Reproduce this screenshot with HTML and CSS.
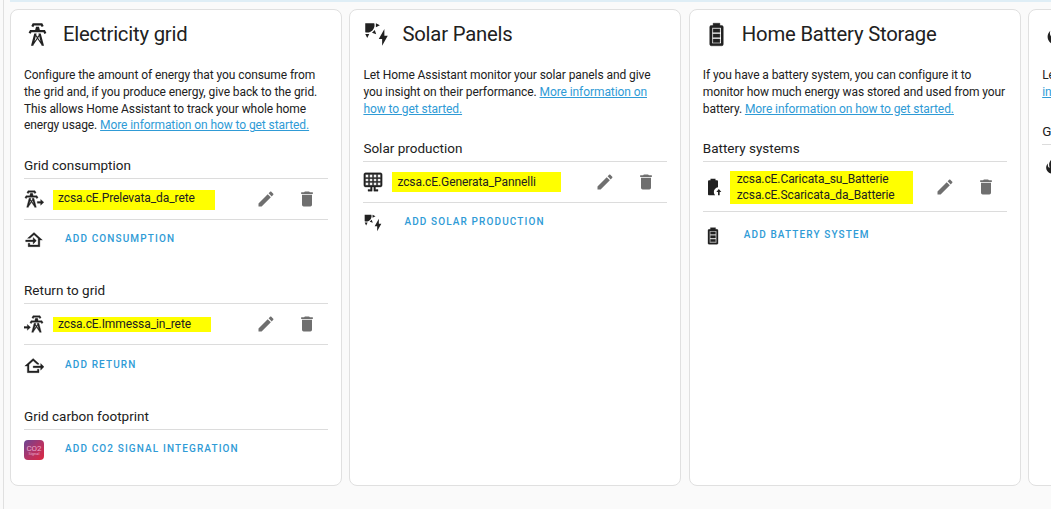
FILE: index.html
```html
<!DOCTYPE html>
<html lang="en">
<head>
<meta charset="utf-8">
<title>Energy configuration</title>
<link rel="stylesheet" href="styles.css">
</head>
<body>
<svg class="defs" aria-hidden="true">
  <symbol id="tower" viewBox="0 0 24 24"><path d="M8.28,5.45L6.5,4.55L7.76,2H16.23L17.5,4.55L15.72,5.44L15,4H9L8.28,5.45M18.62,8H14.09L13.3,5H10.7L9.91,8H5.38L4.1,10.55L5.89,11.44L6.62,10H17.38L18.1,11.45L19.89,10.56L18.62,8M17.77,22H15.7L15.46,21.1L12,15.9L8.53,21.1L8.3,22H6.23L9.12,11H11.19L10.83,12.35L12,14.1L13.16,12.35L12.81,11H14.88L17.77,22M11.4,15L10.5,13.65L9.32,18.13L11.4,15M14.68,18.12L13.5,13.64L12.6,15L14.68,18.12Z"/></symbol>
  <symbol id="solar" viewBox="0 0 24 24"><path d="M11.45,2V5.55L15,3.77L11.45,2M10.45,8L8,10.46L11.75,11.71L10.45,8M2,11.45L3.77,15L5.55,11.45H2M10,2H2V10C2.57,10.17 3.17,10.25 3.77,10.25C7.35,10.26 10.26,7.35 10.27,3.75C10.26,3.16 10.17,2.57 10,2M17,22V16H14L19,7V13H22L17,22Z"/></symbol>
  <symbol id="battery" viewBox="0 0 24 24"><path d="M16,20H8V6H16M16.67,4H15V2H9V4H7.33A1.33,1.33 0 0,0 6,5.33V20.67C6,21.4 6.6,22 7.33,22H16.67A1.33,1.33 0 0,0 18,20.67V5.33C18,4.6 17.4,4 16.67,4M15,16H9V19H15V16M15,7H9V10H15V7M15,11.5H9V14.5H15V11.5Z"/></symbol>
  <symbol id="pencil" viewBox="0 0 24 24"><path d="M20.71,7.04C21.1,6.65 21.1,6 20.71,5.63L18.37,3.29C18,2.9 17.35,2.9 16.96,3.29L15.12,5.12L18.87,8.87M3,17.25V21H6.75L17.81,9.93L14.06,6.18L3,17.25Z"/></symbol>
  <symbol id="delete" viewBox="0 0 24 24"><path d="M19,4H15.5L14.5,3H9.5L8.5,4H5V6H19M6,19A2,2 0 0,0 8,21H16A2,2 0 0,0 18,19V7H6V19Z"/></symbol>
  <symbol id="tower-export" viewBox="0 0 24 24"><use href="#tower" x="-3" y="0" width="24" height="24"/><path d="M20 12.5L23.8 16L20 19.5V17H16V15H20Z"/></symbol>
  <symbol id="tower-import" viewBox="0 0 24 24"><use href="#tower" x="3" y="0" width="24" height="24"/><path d="M4 12.5L7.8 16L4 19.5V17H0V15H4Z"/></symbol>
  <symbol id="home-in" viewBox="0 0 24 24"><path d="M15 13L11 9V12H2V14H11V17M5 20V16H7V18H17V10.19L12 5.69L7.21 10H4.22L12 3L22 12H19V20H5Z"/></symbol>
  <symbol id="home-out" viewBox="0 0 24 24"><path d="M24 13L20 17V14H11V12H20V9L24 13M4 20V12H1L11 3L18 9.3V10H15.79L11 5.69L6 10.19V18H16V16H18V20H4Z"/></symbol>
  <symbol id="panel" viewBox="0 0 24 24"><path fill-rule="evenodd" d="M3 1H21A2 2 0 0 1 23 3V16A2 2 0 0 1 21 18H15V21H18V23H13V18H11V23H6V21H9V18H3A2 2 0 0 1 1 16V3A2 2 0 0 1 3 1M3 3V6.5H6.5V3ZM8 3V6.5H11.3V3ZM12.8 3V6.5H16.1V3ZM17.6 3V6.5H21V3ZM3 8V11.2H6.5V8ZM8 8V11.2H11.3V8ZM12.8 8V11.2H16.1V8ZM17.6 8V11.2H21V8ZM3 12.7V16H6.5V12.7ZM8 12.7V16H11.3V12.7ZM12.8 12.7V16H16.1V12.7ZM17.6 12.7V16H21V12.7Z"/></symbol>
  <symbol id="battery-up" viewBox="0 0 24 24"><path d="M16.67 4H15V2H9V4H7.33A1.33 1.33 0 0 0 6 5.33V20.67C6 21.4 6.6 22 7.33 22H14.5C13.5 20.9 13 19.5 13 18C13 15.2 15.1 12.8 18 12.3V5.33C18 4.6 17.4 4 16.67 4M19 14.5L22 18H20V22H18V18H16Z"/></symbol>
  <symbol id="fire" viewBox="0 0 24 24"><path d="M17.66 11.2C17.43 10.9 17.15 10.64 16.89 10.38C16.22 9.78 15.46 9.35 14.82 8.72C13.33 7.26 13 4.85 13.95 3C13 3.23 12.17 3.75 11.46 4.32C8.87 6.4 7.85 10.07 9.07 13.22C9.11 13.32 9.15 13.42 9.15 13.55C9.15 13.77 9 13.97 8.8 14.05C8.57 14.15 8.33 14.09 8.14 13.93C6.87 12.33 6.69 10.28 7.45 8.64C5.78 10 4.87 12.3 5 14.47C5.12 16.94 6.63 19.18 8.9 20.3C11.5 21.5 15 21.3 17.2 19.3C19.6 17.1 20.1 13.8 17.66 11.2Z"/></symbol>
</svg>
<div class="app">
  <div class="banner"></div>
  <main class="cards">
    <section class="card">
      <h1 class="title"><svg class="title-icon"><use href="#tower"/></svg>Electricity grid</h1>
      <p class="intro">Configure the amount of energy that you consume from<br>the grid and, if you produce energy, give back to the grid.<br>This allows Home Assistant to track your whole home<br>energy usage. <a href="#">More information on how to get started.</a></p>
      <h2 class="heading">Grid consumption</h2>
      <div class="row"><svg class="icon bold"><use href="#tower-export"/></svg><span class="mark mark-grid">zcsa.cE.Prelevata_da_rete</span><span class="tools"><svg class="icon"><use href="#pencil"/></svg><svg class="icon"><use href="#delete"/></svg></span></div>
      <div class="action"><svg class="icon bold"><use href="#home-in"/></svg><a class="button" href="#">ADD CONSUMPTION</a></div>
      <h2 class="heading">Return to grid</h2>
      <div class="row"><svg class="icon bold"><use href="#tower-import"/></svg><span class="mark mark-return">zcsa.cE.Immessa_in_rete</span><span class="tools"><svg class="icon"><use href="#pencil"/></svg><svg class="icon"><use href="#delete"/></svg></span></div>
      <div class="action"><svg class="icon bold"><use href="#home-out"/></svg><a class="button" href="#">ADD RETURN</a></div>
      <h2 class="heading">Grid carbon footprint</h2>
      <div class="action"><span class="co2"><span class="co2-name">CO2</span><span class="co2-sub">Signal</span></span><a class="button" href="#">ADD CO2 SIGNAL INTEGRATION</a></div>
    </section>
    <section class="card">
      <h1 class="title"><svg class="title-icon"><use href="#solar"/></svg>Solar Panels</h1>
      <p class="intro">Let Home Assistant monitor your solar panels and give<br>you insight on their performance. <a href="#">More information on<br>how to get started.</a></p>
      <h2 class="heading">Solar production</h2>
      <div class="row"><svg class="icon bold"><use href="#panel"/></svg><span class="mark mark-solar">zcsa.cE.Generata_Pannelli</span><span class="tools"><svg class="icon"><use href="#pencil"/></svg><svg class="icon"><use href="#delete"/></svg></span></div>
      <div class="action"><svg class="icon"><use href="#solar"/></svg><a class="button" href="#">ADD SOLAR PRODUCTION</a></div>
    </section>
    <section class="card">
      <h1 class="title"><svg class="title-icon bold"><use href="#battery"/></svg>Home Battery Storage</h1>
      <p class="intro">If you have a battery system, you can configure it to<br>monitor how much energy was stored and used from your<br>battery. <a href="#">More information on how to get started.</a></p>
      <h2 class="heading">Battery systems</h2>
      <div class="row row-tall"><svg class="icon"><use href="#battery-up"/></svg><span class="mark mark-battery">zcsa.cE.Caricata_su_Batterie<br>zcsa.cE.Scaricata_da_Batterie</span><span class="tools"><svg class="icon"><use href="#pencil"/></svg><svg class="icon"><use href="#delete"/></svg></span></div>
      <div class="action action-battery"><svg class="icon bold"><use href="#battery"/></svg><a class="button" href="#">ADD BATTERY SYSTEM</a></div>
    </section>
    <section class="card">
      <h1 class="title"><svg class="title-icon"><use href="#fire"/></svg></h1>
      <p class="intro">Let Home Assistant monitor your gas usage. More<br><a href="#">information on how to get started.</a></p>
      <h2 class="heading heading-gas">Gas consumption</h2>
      <div class="row row-open"><svg class="icon"><use href="#fire"/></svg></div>
    </section>
  </main>
</div>
</body>
</html>
```
FILE: styles.css
```css
* { box-sizing: border-box; }
html, body { height: 100%; }
body {
  margin: 0;
  overflow: hidden;
  background: #fafafa;
  color: #212121;
  font-family: Roboto, sans-serif;
  font-size: 12px;
}
.defs { display: none; }
.app {
  height: 509px;
  margin-left: 3px;
  border-left: 1px solid #e0e0e0;
  overflow: hidden;
}
.banner { height: 2px; margin-left: 6px; background: #dfeef6; }
.cards {
  display: grid;
  grid-template-columns: repeat(4, 332px);
  gap: 7.4px;
  height: 477px;
  margin: 7px 0 0 6px;
}
.card {
  padding: 0 13px;
  border: 1px solid #e0e0e0;
  border-radius: 8px;
  background: #fff;
}
.title {
  display: flex;
  align-items: center;
  gap: 12px;
  height: 50px;
  margin: 0 0 7px;
  padding-bottom: 3px;
  font-size: 20.3px;
  font-weight: 400;
  letter-spacing: -.2px;
  white-space: nowrap;
}
.title-icon { width: 27px; height: 27px; margin-top: 2px; fill: currentColor; flex: none; }
.intro {
  margin: 0;
  padding-bottom: .8px;
  font-size: 12px;
  line-height: 16.8px;
  letter-spacing: -.085px;
  white-space: nowrap;
}
a { color: #2f9bd6; text-underline-offset: 1px; }
.heading {
  display: flex;
  align-items: flex-end;
  height: 44px;
  margin: 0;
  padding-bottom: 5px;
  border-bottom: 1px solid #dcdcdc;
  font-size: 13.5px;
  font-weight: 400;
  line-height: 16px;
  white-space: nowrap;
}
.row, .action { display: flex; align-items: center; height: 41px; }
.row { border-bottom: 1px solid #dcdcdc; }
.row-tall { height: 50px; }
.row-open { border-bottom: 0; }
.action { height: 40.5px; }
.action-battery { height: 47px; }
.icon { width: 20px; height: 20px; flex: none; fill: currentColor; }
.bold { stroke: currentColor; stroke-width: .4px; }
.mark {
  margin-left: 9px;
  padding: 0 5px;
  background: #ff0;
  letter-spacing: -.08px;
  line-height: 16.8px;
  white-space: nowrap;
}
.mark-grid { width: 162px; height: 20px; margin-top: 3px; }
.mark-return { width: 158px; height: 15px; line-height: 15px; }
.mark-solar { width: 169px; height: 20px; margin-top: -1px; line-height: 21px; }
.mark-battery { width: 183px; height: 33px; margin-top: 1px; margin-left: 7px; padding-left: 7px; line-height: 16.6px; }
.tools { display: flex; gap: 21px; margin-left: auto; margin-right: 11px; color: #6f6f6f; }
.button {
  margin-top: -3px;
  margin-left: 21px;
  font-size: 10px;
  font-weight: 500;
  letter-spacing: 1.12px;
  text-decoration: none;
  white-space: nowrap;
}
.co2 {
  display: flex;
  flex-direction: column;
  align-items: center;
  justify-content: center;
  width: 20px;
  height: 20px;
  border-radius: 4px;
  background: linear-gradient(135deg, #6a4594, #b13468 50%, #dc2840);
  color: #e9a9cd;
}
.co2-name { font-size: 8px; line-height: 7px; }
.co2-sub { font-size: 4px; line-height: 4px; }
```
